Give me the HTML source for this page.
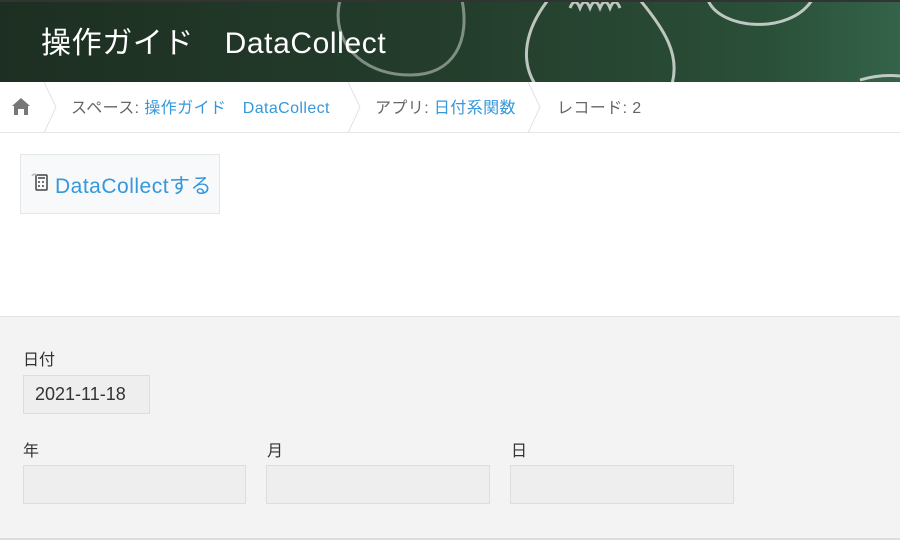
<!DOCTYPE html>
<html><head><meta charset="utf-8"><style>
*{margin:0;padding:0;box-sizing:border-box}
body{width:900px;height:542px;overflow:hidden;background:#fff;font-family:"Liberation Sans","Noto Sans CJK JP",sans-serif;position:relative}
.hdr{position:absolute;left:0;top:0;width:900px;height:82px;background:linear-gradient(90deg,#1d2f22 0%,#243d2c 50%,#2a4f38 85%,#34634a 100%);border-top:2px solid #333;overflow:hidden}
.hdr h1{position:absolute;left:41px;top:16px;color:#fff;font-weight:normal;font-size:30px;letter-spacing:0.6px;white-space:pre}
.bc{position:absolute;top:82px;left:0;width:900px;height:51px;border-bottom:1px solid #e3e7e8;font-size:16px;color:#666}
.bc span{position:absolute;top:12px;white-space:pre;letter-spacing:0.4px}
.bc a{color:#3498db;text-decoration:none}
.btn{position:absolute;left:20px;top:154px;width:200px;height:60px;background:#f7f9fa;border:1px solid #e3e7e8;font-size:21px;color:#3498db}
.btn span{position:absolute;left:34px;top:15px;letter-spacing:0.5px;white-space:pre}
.form{position:absolute;left:0;top:316px;width:900px;height:224px;background:#f3f3f3;border-top:1px solid #e3e3e3;border-bottom:2px solid #ddd}
.lbl{position:absolute;font-size:16px;color:#333}
.box{position:absolute;background:#eee;border:1px solid #ddd;font-size:18px;color:#333}
</style></head><body>
<div class="hdr">
<svg width="900" height="82" style="position:absolute;left:0;top:-2px" fill="none" stroke="#d8ddd8" stroke-width="3" opacity="0.85">
<path d="M340 0 C330 40 360 75 410 75 C455 75 470 40 462 0" opacity=".6"/>
<path d="M548 0 C525 30 520 60 535 84 M640 0 C665 30 680 55 672 84"/>
<path d="M570 8 q5 -12 10 0 q5 -12 10 0 q5 -12 10 0 q5 -12 10 0 q5 -12 10 0"/>
<path d="M708 0 C720 30 790 35 812 0"/>
<path d="M860 80 q20 -6 40 -4"/>
</svg>
<h1>操作ガイド　DataCollect</h1>
</div>
<div class="bc">
<svg width="900" height="51" style="position:absolute;left:0;top:0" fill="none" stroke="#dfe3e4" stroke-width="1">
<path d="M44 0 L56 25 L44 51 M348 0 L360 25 L348 51 M528 0 L540 25 L528 51"/>
<path d="M12 24 L21 16 L30 24 H28 V33 H24 V27 H18 V33 H14 V24 Z" fill="#777" stroke="none"/>
</svg>
<span style="left:71px">スペース: <a>操作ガイド　DataCollect</a></span>
<span style="left:375px">アプリ: <a>日付系関数</a></span>
<span style="left:557px">レコード: 2</span>
</div>
<div class="btn">
<svg width="20" height="22" style="position:absolute;left:10px;top:17px" fill="none" stroke="#444" stroke-width="1.5"><rect x="5" y="3" width="11" height="15" rx="1"/><path d="M7 6h7M7 10h2M11 10h2M7 14h2M11 14h2"/><path d="M1 4 q2 -3 5 -1" stroke="#bbb"/></svg>
<span>DataCollectする</span>
</div>
<div class="form">
<div class="lbl" style="left:23px;top:29px">日付</div>
<div class="box" style="left:23px;top:58px;width:127px;height:39px"><span style="position:absolute;left:11px;top:8px">2021-11-18</span></div>
<div class="lbl" style="left:23px;top:120px">年</div>
<div class="lbl" style="left:267px;top:120px">月</div>
<div class="lbl" style="left:511px;top:120px">日</div>
<div class="box" style="left:23px;top:148px;width:223px;height:39px"></div>
<div class="box" style="left:266px;top:148px;width:224px;height:39px"></div>
<div class="box" style="left:510px;top:148px;width:224px;height:39px"></div>
</div>
</body></html>
